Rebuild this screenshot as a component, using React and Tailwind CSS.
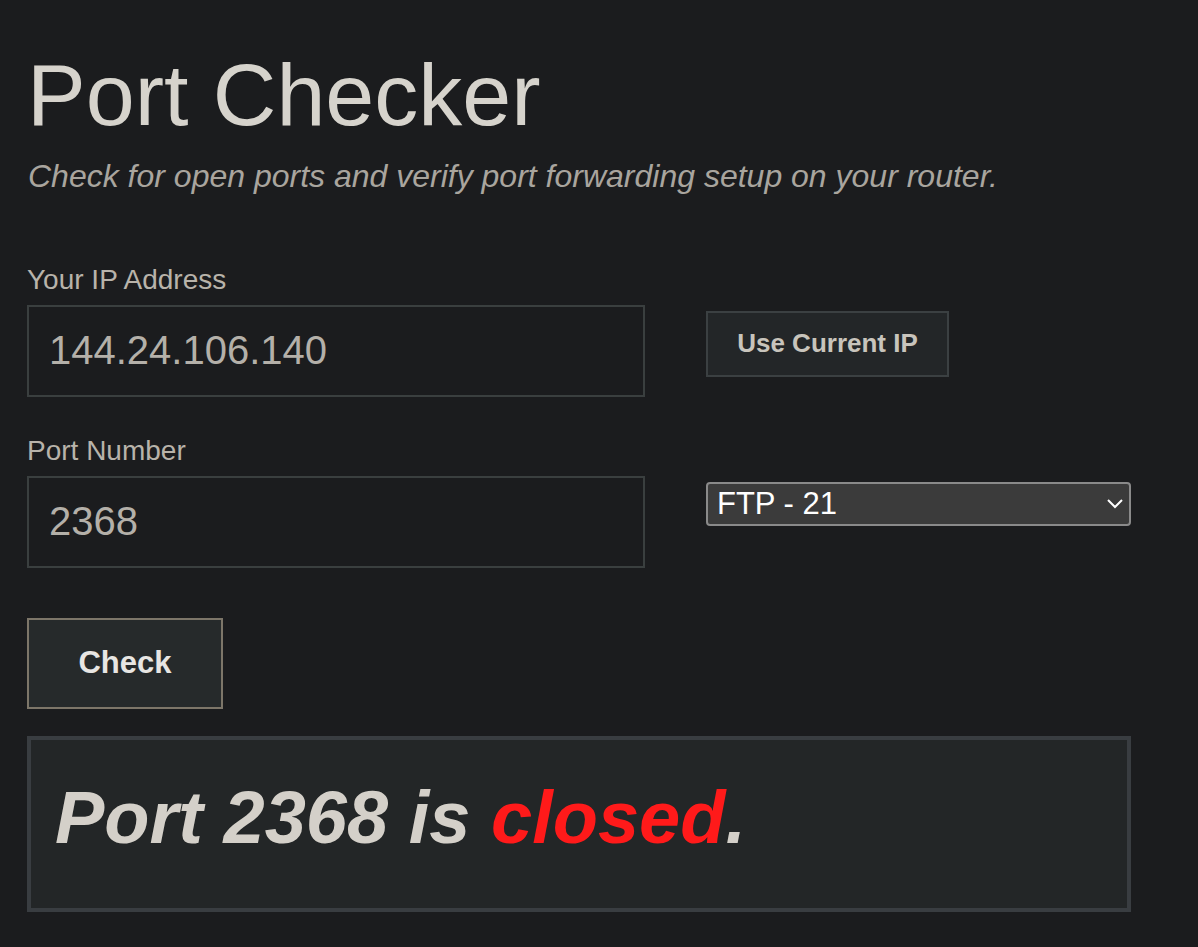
import React, { useState } from "react";

const PORTS = [
  { label: "FTP - 21", value: "21" },
  { label: "SSH - 22", value: "22" },
  { label: "Telnet - 23", value: "23" },
  { label: "SMTP - 25", value: "25" },
  { label: "HTTP - 80", value: "80" },
  { label: "HTTPS - 443", value: "443" },
];

function Field({ label, value, onChange, children }) {
  return (
    <div className="flex items-start gap-[61px]">
      <div className="flex flex-col w-[618px]">
        <label className="text-[28px] leading-[1.1] text-[#b8b3aa] mb-[9px]">{label}</label>
        <input
          value={value}
          onChange={(e) => onChange(e.target.value)}
          className="h-[92px] border-2 border-[#3a3f3f] bg-[#1b1c1e] px-[20px] text-[40px] text-[#b4b0a9] outline-none"
        />
      </div>
      <div className="pt-[46px]">{children}</div>
    </div>
  );
}

export default function App() {
  const [ip, setIp] = useState("144.24.106.140");
  const [port, setPort] = useState("2368");

  return (
    <div className="min-h-screen bg-[#1b1c1e] font-['Liberation_Sans',Arial,sans-serif] pl-[27px] pt-[44px] pb-[36px]">
      <h1 className="text-[88px] leading-[1.15] text-[#d6d3cc]">Port Checker</h1>
      <p className="mt-[13px] text-[32px] leading-[1.15] italic text-[#a9a59e] pl-px">
        Check for open ports and verify port forwarding setup on your router.
      </p>

      <div className="mt-[70px] flex flex-col gap-[39px]">
        <Field label="Your IP Address" value={ip} onChange={setIp}>
          <button className="w-[243px] h-[66px] border-2 border-[#3b4042] bg-[#232628] text-[26px] font-bold text-[#c8c4bc]">
            Use Current IP
          </button>
        </Field>

        <Field label="Port Number" value={port} onChange={setPort}>
          <div className="relative w-[425px] h-[44px]">
            <select
              defaultValue="21"
              className="appearance-none w-full h-full rounded-[4px] border-2 border-[#8a8a8a] bg-[#3b3b3b] pl-[9px] text-[31px] leading-none text-white outline-none"
            >
              {PORTS.map((p) => (
                <option key={p.value} value={p.value}>
                  {p.label}
                </option>
              ))}
            </select>
            <svg
              className="pointer-events-none absolute right-[7px] top-[15px]"
              width="18"
              height="12"
              viewBox="0 0 18 12"
              fill="none"
            >
              <path d="M2 3l7 7 7-7" stroke="#ffffff" strokeWidth="2" />
            </svg>
          </div>
        </Field>
      </div>

      <button className="mt-[50px] w-[196px] h-[91px] border-2 border-[#7d7669] bg-[#262a2b] text-[31px] font-bold text-[#e8e6e3]">
        Check
      </button>

      <div className="mt-[27px] w-[1104px] h-[176px] border-4 border-[#393d41] bg-[#232627] flex items-center pl-[24px] pb-[12px]">
        <p className="text-[74px] leading-none font-bold italic text-[#d4d0c9]">
          Port {port} is <span className="text-[#ff1a1a]">closed</span>.
        </p>
      </div>
    </div>
  );
}
